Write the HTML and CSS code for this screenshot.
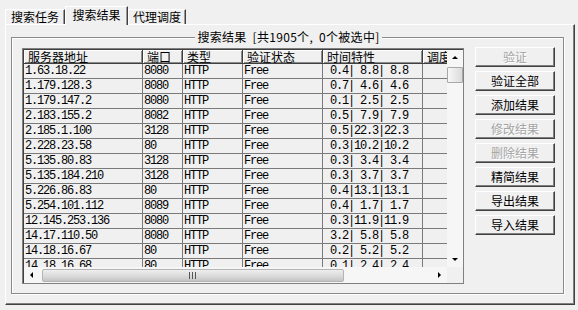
FILE: index.html
```html
<!DOCTYPE html>
<html lang="zh-CN">
<head>
<meta charset="utf-8">
<title>搜索结果</title>
<link rel="stylesheet" href="styles.css">
</head>
<body>
<div class="tabs">
  <div class="tab t1">搜索任务</div>
  <div class="tab t2 active">搜索结果</div>
  <div class="tab t3">代理调度</div>
</div>
<div class="panel">
  <fieldset class="group">
    <legend>搜索结果 [共1905个, 0个被选中]</legend>
    <div class="group-body">
      <div class="list">
        <div class="viewport">
          <div class="head-clip">
            <div class="row head">
              <div class="hc">服务器地址</div><div class="hc">端口</div><div class="hc">类型</div><div class="hc">验证状态</div><div class="hc">时间特性</div><div class="hc">调度</div>
            </div>
          </div>
          <div class="body-clip">
            <div class="row"><div class="c">1.63.18.22</div><div class="c">8080</div><div class="c">HTTP</div><div class="c">Free</div><div class="c"> 0.4| 8.8| 8.8</div><div class="c"></div></div>
            <div class="row"><div class="c">1.179.128.3</div><div class="c">8080</div><div class="c">HTTP</div><div class="c">Free</div><div class="c"> 0.7| 4.6| 4.6</div><div class="c"></div></div>
            <div class="row"><div class="c">1.179.147.2</div><div class="c">8080</div><div class="c">HTTP</div><div class="c">Free</div><div class="c"> 0.1| 2.5| 2.5</div><div class="c"></div></div>
            <div class="row"><div class="c">2.183.155.2</div><div class="c">8082</div><div class="c">HTTP</div><div class="c">Free</div><div class="c"> 0.5| 7.9| 7.9</div><div class="c"></div></div>
            <div class="row"><div class="c">2.185.1.100</div><div class="c">3128</div><div class="c">HTTP</div><div class="c">Free</div><div class="c"> 0.5|22.3|22.3</div><div class="c"></div></div>
            <div class="row"><div class="c">2.228.23.58</div><div class="c">80</div><div class="c">HTTP</div><div class="c">Free</div><div class="c"> 0.3|10.2|10.2</div><div class="c"></div></div>
            <div class="row"><div class="c">5.135.80.83</div><div class="c">3128</div><div class="c">HTTP</div><div class="c">Free</div><div class="c"> 0.3| 3.4| 3.4</div><div class="c"></div></div>
            <div class="row"><div class="c">5.135.184.210</div><div class="c">3128</div><div class="c">HTTP</div><div class="c">Free</div><div class="c"> 0.3| 3.7| 3.7</div><div class="c"></div></div>
            <div class="row"><div class="c">5.226.86.83</div><div class="c">80</div><div class="c">HTTP</div><div class="c">Free</div><div class="c"> 0.4|13.1|13.1</div><div class="c"></div></div>
            <div class="row"><div class="c">5.254.101.112</div><div class="c">8089</div><div class="c">HTTP</div><div class="c">Free</div><div class="c"> 0.4| 1.7| 1.7</div><div class="c"></div></div>
            <div class="row"><div class="c">12.145.253.136</div><div class="c">8080</div><div class="c">HTTP</div><div class="c">Free</div><div class="c"> 0.3|11.9|11.9</div><div class="c"></div></div>
            <div class="row"><div class="c">14.17.110.50</div><div class="c">8080</div><div class="c">HTTP</div><div class="c">Free</div><div class="c"> 3.2| 5.8| 5.8</div><div class="c"></div></div>
            <div class="row"><div class="c">14.18.16.67</div><div class="c">80</div><div class="c">HTTP</div><div class="c">Free</div><div class="c"> 0.2| 5.2| 5.2</div><div class="c"></div></div>
            <div class="row"><div class="c">14.18.16.68</div><div class="c">80</div><div class="c">HTTP</div><div class="c">Free</div><div class="c"> 0.1| 2.4| 2.4</div><div class="c"></div></div>
          </div>
        </div>
        <div class="vscroll">
          <div class="arrow-box"><svg width="16" height="16" viewBox="0 0 16 16"><polygon points="5,9 8,6 11,9" fill="#000"/></svg></div>
          <div class="vtrack"><div class="vthumb"></div></div>
          <div class="arrow-box"><svg width="16" height="16" viewBox="0 0 16 16"><polygon points="5,7 11,7 8,10" fill="#000"/></svg></div>
        </div>
        <div class="hscroll">
          <div class="arrow-box"><svg width="16" height="16" viewBox="0 0 16 16"><polygon points="9,5 9,11 6,8" fill="#000"/></svg></div>
          <div class="htrack">
            <div class="hthumb"><svg width="8" height="7" viewBox="0 0 8 7"><rect x="0" y="0" width="1" height="7" fill="#555"/><rect x="3" y="0" width="1" height="7" fill="#555"/><rect x="6" y="0" width="1" height="7" fill="#555"/></svg></div>
          </div>
          <div class="arrow-box"><svg width="16" height="16" viewBox="0 0 16 16"><polygon points="7,5 7,11 10,8" fill="#000"/></svg></div>
        </div>
        <div class="corner"></div>
      </div>
      <div class="buttons">
        <button class="btn" disabled>验证</button>
        <button class="btn">验证全部</button>
        <button class="btn">添加结果</button>
        <button class="btn" disabled>修改结果</button>
        <button class="btn" disabled>删除结果</button>
        <button class="btn">精简结果</button>
        <button class="btn">导出结果</button>
        <button class="btn">导入结果</button>
      </div>
    </div>
  </fieldset>
</div>
</body>
</html>
```
FILE: styles.css
```css
html, body {
  margin: 0;
  padding: 0;
}
body {
  width: 578px;
  height: 310px;
  overflow: hidden;
  background: #f0f0f0;
  font-family: "Noto Sans CJK SC", "Noto Sans", sans-serif;
  font-size: 12px;
  color: #000;
}

/* tabs */
.tabs {
  display: flex;
  align-items: flex-end;
  height: 18px;
  padding: 6px 0 0 5px;
}
.tab {
  box-sizing: border-box;
  height: 15px;
  border-top: 1px solid #fff;
  border-left: 1px solid #fff;
  border-right: 1px solid #404040;
  box-shadow: inset -1px 0 0 #9a9a9a;
  display: flex;
  align-items: center;
  justify-content: center;
  line-height: 14px;
  background: #f0f0f0;
}
.t1 { width: 60px; }
.t2 { width: 63px; }
.t3 { width: 58px; }
.tab.active {
  height: 19px;
  margin-bottom: -1px;
  align-items: flex-start;
  padding-top: 1px;
  position: relative;
  z-index: 1;
}

/* panel */
.panel {
  box-sizing: border-box;
  margin-left: 5px;
  width: 570px;
  height: 281px;
  border-top: 1px solid #fff;
  border-left: 1px solid #fff;
  border-right: 1px solid #404040;
  border-bottom: 1px solid #404040;
  box-shadow: inset -1px -1px 0 #808080;
  padding: 5px 8px 8px 5px;
}

.group {
  box-sizing: border-box;
  margin: 0;
  width: 553px;
  height: 264px;
  padding: 0 8px 0 10px;
  border: 1px solid #8a8a8a;
  box-shadow: 1px 1px 0 #fff, inset 1px 1px 0 #fff;
  min-width: 0;
}
.group legend {
  margin: 0 auto;
  padding: 0 2px;
  line-height: 14px;
  height: 14px;
  letter-spacing: 0.3px;
  word-spacing: 3px;
  background: #f0f0f0;
}
.group-body {
  display: flex;
  align-items: flex-start;
  gap: 11px;
  padding-top: 4px;
}

/* list view */
.list {
  box-sizing: border-box;
  width: 442px;
  height: 236px;
  border: 1px solid #808080;
  padding: 1px 0 0 1px;
  box-shadow: inset 1px 1px 0 #404040;
  display: grid;
  grid-template-columns: 423px 16px;
  grid-template-rows: 217px 16px;
}
.viewport {
  display: flex;
  flex-direction: column;
  min-width: 0;
}
.head-clip {
  overflow-x: clip;
  overflow-y: visible;
  flex: none;
}
.body-clip {
  overflow: hidden;
  flex: 1;
}
.row {
  display: grid;
  grid-template-columns: 119px 40px 60px 80px 100px 60px;
  width: 459px;
}
.hc {
  box-sizing: border-box;
  height: 14px;
  line-height: 14px;
  padding-left: 4px;
  border-right: 1px solid #404040;
  border-bottom: 1px solid #404040;
  box-shadow: inset 1px 1px 0 #fff, inset -1px -1px 0 #8a8a8a;
  white-space: nowrap;
}
.c {
  box-sizing: border-box;
  height: 15px;
  line-height: 14px;
  padding-left: 1px;
  border-right: 1px solid #7a7a7a;
  border-bottom: 1px solid #7a7a7a;
  font-family: "Liberation Mono", "DejaVu Sans Mono", monospace;
  font-size: 12px;
  letter-spacing: -1.2px;
  white-space: pre;
}

/* scrollbars */
.vscroll {
  display: flex;
  flex-direction: column;
  background: #f6f6f6;
}
.arrow-box {
  width: 16px;
  height: 16px;
  flex: none;
}
.arrow-box svg { display: block; }
.vtrack {
  flex: 1;
  padding-top: 1px;
}
.vthumb {
  box-sizing: border-box;
  height: 16px;
  border: 1px solid #a8a8a8;
  border-radius: 1px;
  background: linear-gradient(to right, #f8f8f8, #dadada);
}
.hscroll {
  display: flex;
  background: #f6f6f6;
}
.htrack {
  flex: 1;
  padding: 2px 0 1px 2px;
}
.hthumb {
  box-sizing: border-box;
  width: 302px;
  height: 13px;
  border: 1px solid #b4b4b4;
  border-radius: 2px;
  background: linear-gradient(to bottom, #eeeeee, #d8d8d8 60%, #c4c4c4);
  display: flex;
  align-items: center;
  justify-content: center;
}
.hthumb svg { display: block; }
.corner {
  background: #f0f0f0;
}

/* buttons */
.buttons {
  display: flex;
  flex-direction: column;
  gap: 4px;
  width: 80px;
  margin-top: -1px;
}
.btn {
  box-sizing: border-box;
  height: 20px;
  width: 80px;
  margin: 0;
  padding: 0;
  border: none;
  border-top: 1px solid #fff;
  border-left: 1px solid #fff;
  border-right: 1px solid #404040;
  border-bottom: 1px solid #404040;
  box-shadow: inset -1px -1px 0 #808080;
  background: #f0f0f0;
  font-family: "Noto Sans CJK SC", "Noto Sans", sans-serif;
  font-size: 12px;
  line-height: 16px;
  color: #000;
}
.btn:disabled {
  color: #a4a4a4;
  text-shadow: 1px 1px 0 #fff;
}
```
